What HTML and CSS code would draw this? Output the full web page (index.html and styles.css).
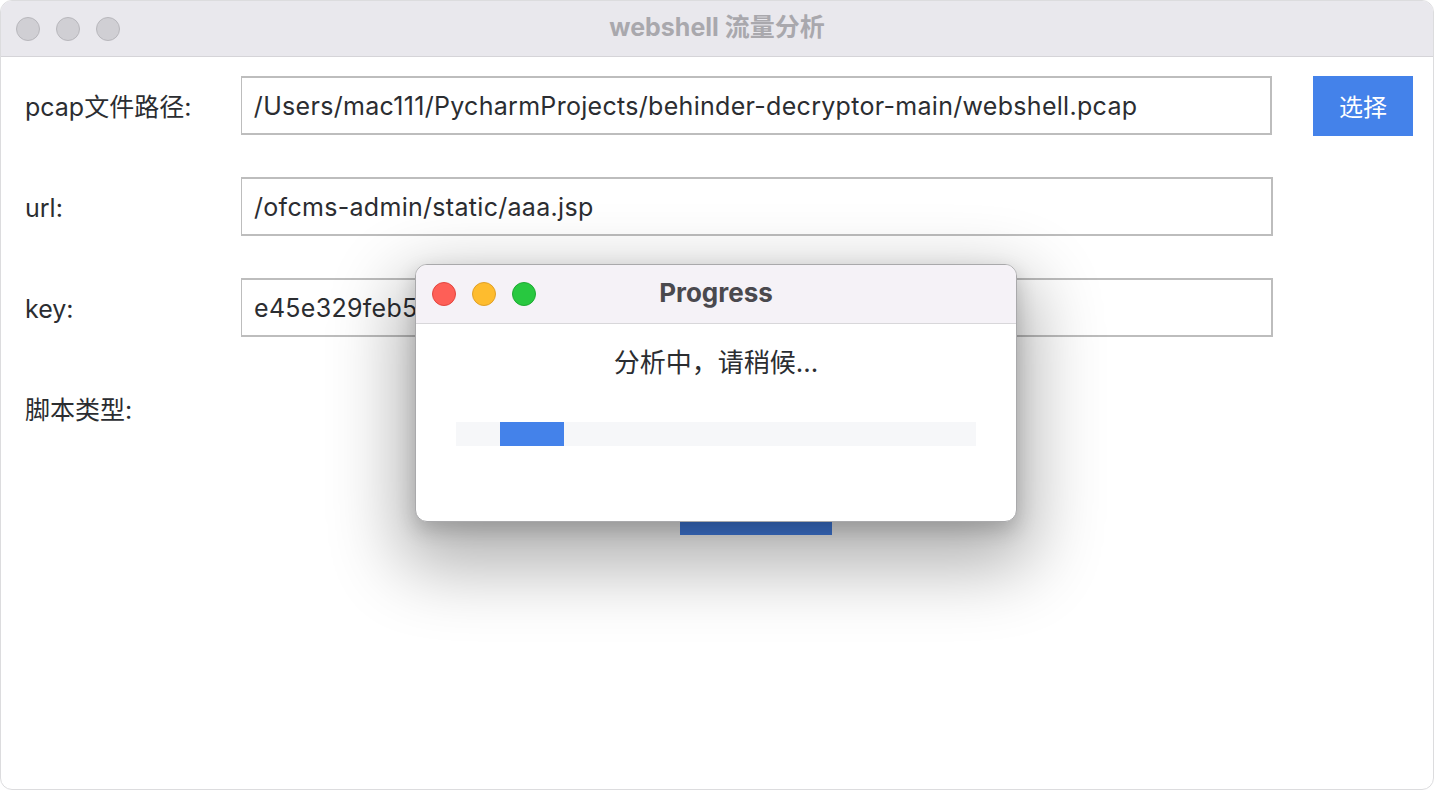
FILE: index.html
```html
<!DOCTYPE html>
<html lang="zh-CN">
<head>
<meta charset="utf-8">
<title>webshell流量分析</title>
<link rel="stylesheet" href="styles.css">
</head>
<body>
<div class="window">
  <div class="titlebar">
    <div class="lights">
      <span class="light gray"></span>
      <span class="light gray"></span>
      <span class="light gray"></span>
    </div>
    <div class="title">webshell 流量分析</div>
    <div></div>
  </div>
  <div class="form">
    <div class="row">
      <label class="label">pcap文件路径:</label>
      <div class="field">/Users/mac111/PycharmProjects/behinder-decryptor-main/webshell.pcap</div>
      <button class="btn-choose">选择</button>
    </div>
    <div class="row">
      <label class="label">url:</label>
      <div class="field">/ofcms-admin/static/aaa.jsp</div>
    </div>
    <div class="row">
      <label class="label">key:</label>
      <div class="field">e45e329feb5d925b</div>
    </div>
    <div class="row">
      <label class="label">脚本类型:</label>
    </div>
    <div class="action-row">
      <button class="btn-start">开始分析</button>
    </div>
  </div>

  <div class="dialog">
    <div class="dlg-titlebar">
      <div class="lights">
        <span class="light red"></span>
        <span class="light yellow"></span>
        <span class="light green"></span>
      </div>
      <div class="dlg-title">Progress</div>
      <div></div>
    </div>
    <div class="dlg-body">
      <div class="dlg-text">分析中，请稍候...</div>
      <div class="progress"><div class="progress-fill"></div></div>
    </div>
  </div>
</div>
</body>
</html>
```

FILE: styles.css
```css
* { box-sizing: border-box; }
html, body {
  margin: 0;
  padding: 0;
  background: #ffffff;
}
body {
  font-family: "Inter", "Noto Sans CJK SC", sans-serif;
  color: #2b2d31;
}
.window {
  position: relative;
  width: 1434px;
  height: 790px;
  border-radius: 12px;
  border: 1px solid #dcdcde;
  overflow: hidden;
  background: #ffffff;
}
.titlebar {
  height: 56px;
  background: #e9e8ed;
  border-bottom: 1px solid #d5d4d8;
  display: grid;
  grid-template-columns: 1fr auto 1fr;
  align-items: center;
}
.lights {
  display: flex;
  gap: 16px;
  margin-left: 15px;
}
.light {
  width: 24px;
  height: 24px;
  border-radius: 50%;
  display: block;
}
.light.gray { background: #d0cfd4; border: 1px solid #b8b7bc; }
.light.red { background: #fe5f57; border: 1px solid #e2463f; }
.light.yellow { background: #febc2e; border: 1px solid #e0a028; }
.light.green { background: #28c840; border: 1px solid #1eaa33; }
.title {
  font-weight: 700;
  font-size: 25px;
  line-height: 1;
  color: #a9a8ad;
  margin-top: -3px;
}
.form {
  padding: 19px 20px 0 24px;
  display: flex;
  flex-direction: column;
  gap: 42px;
}
.row {
  display: flex;
  align-items: center;
  height: 59px;
}
.label {
  width: 216px;
  font-size: 25px;
  line-height: 1;
  color: #2b2d31;
  margin-top: 3px;
}
.field {
  width: 1032px;
  height: 59px;
  border: 2px solid #bdbdbd;
  border-left-width: 1px;
  padding-left: 12px;
  display: flex;
  align-items: center;
  font-size: 25px;
  letter-spacing: 0.3px;
  color: #2b2d31;
  white-space: nowrap;
  overflow: hidden;
}
.btn-choose {
  margin-left: 41px;
  width: 100px;
  height: 60px;
  border: none;
  background: #4482ea;
  color: #ffffff;
  font-family: "Noto Sans CJK SC", sans-serif;
  font-size: 24px;
  padding: 0;
}
.action-row {
  margin-top: 1px;
  padding-left: 655px;
}
.btn-start {
  width: 152px;
  height: 54px;
  border: none;
  background: #4482ea;
  color: #4482ea;
  font-size: 20px;
}
.dialog {
  position: absolute;
  left: 414px;
  top: 263px;
  width: 602px;
  height: 258px;
  border-radius: 12px;
  border: 1px solid #a9a9ab;
  background: #ffffff;
  overflow: hidden;
  box-shadow: 0 30px 70px 16px rgba(0, 0, 0, 0.30), 0 8px 20px rgba(0, 0, 0, 0.18);
}
.dlg-titlebar {
  height: 59px;
  background: #f5f2f7;
  border-bottom: 1px solid #d8d7da;
  display: grid;
  grid-template-columns: 1fr auto 1fr;
  align-items: center;
}
.dlg-titlebar .lights {
  margin-left: 16px;
}
.dlg-title {
  font-weight: 700;
  font-size: 26px;
  line-height: 1;
  color: #4a494e;
  margin-top: -2px;
}
.dlg-body {
  display: flex;
  flex-direction: column;
  align-items: center;
}
.dlg-text {
  margin-top: 24px;
  font-size: 26px;
  line-height: 30px;
  color: #2b2d31;
}
.progress {
  margin-top: 44px;
  width: 520px;
  height: 24px;
  background: #f6f7f9;
  padding-left: 44px;
}
.progress-fill {
  width: 64px;
  height: 24px;
  background: #4482ea;
}
```
